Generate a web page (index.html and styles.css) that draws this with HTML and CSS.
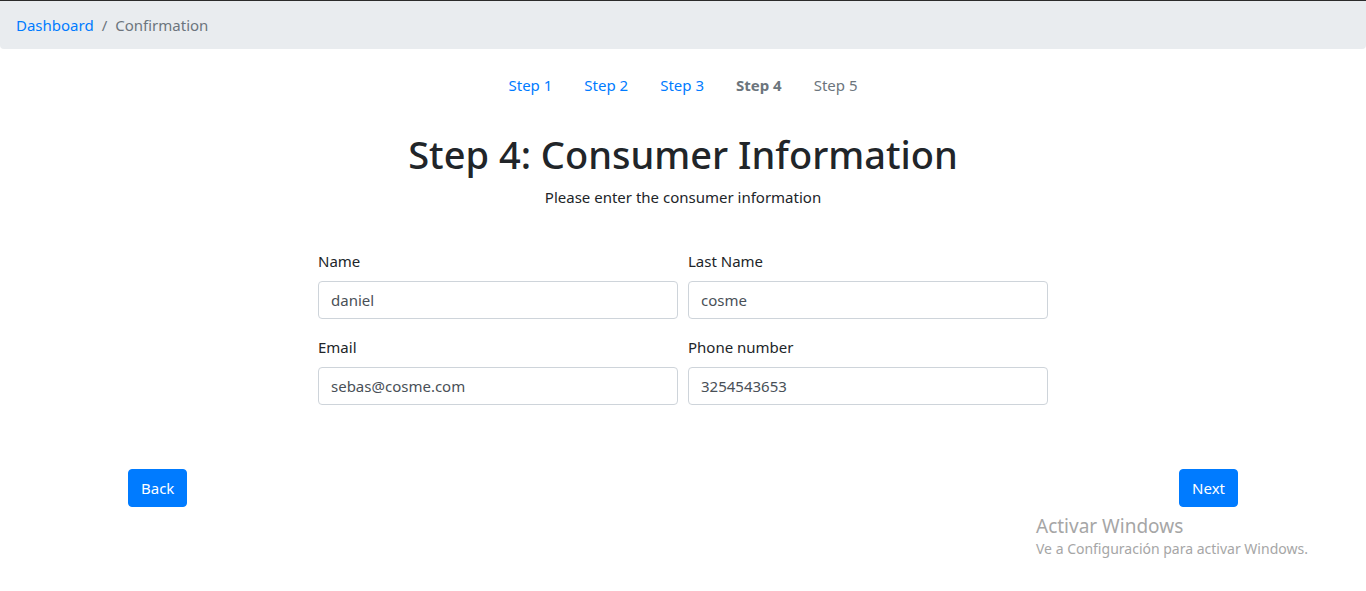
FILE: index.html
```html
<!DOCTYPE html>
<html lang="en">
<head>
<meta charset="utf-8">
<title>Confirmation</title>
<link rel="stylesheet" href="styles.css">
</head>
<body>
<div class="topline"></div>
<nav class="breadcrumb">
  <a class="crumb-link" href="#">Dashboard</a>
  <span class="crumb-sep">/</span>
  <span class="crumb-active">Confirmation</span>
</nav>
<ul class="steps">
  <li><a class="step-link" href="#">Step 1</a></li>
  <li><a class="step-link" href="#">Step 2</a></li>
  <li><a class="step-link" href="#">Step 3</a></li>
  <li><span class="step-link current">Step 4</span></li>
  <li><span class="step-link disabled">Step 5</span></li>
</ul>
<main class="container">
  <h1 class="title">Step 4: Consumer Information</h1>
  <p class="subtitle">Please enter the consumer information</p>
  <form class="form">
    <div class="form-row">
      <div class="form-group">
        <label class="label">Name</label>
        <input class="input" type="text" value="daniel">
      </div>
      <div class="form-group">
        <label class="label">Last Name</label>
        <input class="input" type="text" value="cosme">
      </div>
    </div>
    <div class="form-row">
      <div class="form-group">
        <label class="label">Email</label>
        <input class="input" type="text" value="sebas@cosme.com">
      </div>
      <div class="form-group">
        <label class="label">Phone number</label>
        <input class="input" type="text" value="3254543653">
      </div>
    </div>
  </form>
  <div class="actions">
    <button class="btn" type="button">Back</button>
    <button class="btn" type="button">Next</button>
  </div>
</main>
<div class="watermark">
  <div class="wm-title">Activar Windows</div>
  <div class="wm-sub">Ve a Configuración para activar Windows.</div>
</div>
</body>
</html>
```
FILE: styles.css
```css
* { box-sizing: border-box; }
html, body { margin: 0; padding: 0; }
body {
  font-family: "Noto Sans", "Open Sans", sans-serif;
  font-size: 15px;
  line-height: 24px;
  color: #212529;
  background: #fff;
  position: relative;
  min-height: 591px;
}
.topline { height: 1px; background: #2b2b2b; }
.breadcrumb {
  display: flex;
  align-items: center;
  height: 48px;
  padding: 12px 16px;
  margin: 0 0 16px;
  background: #e9ecef;
  border-radius: 0 0 4px 4px;
}
.crumb-link { color: #007bff; text-decoration: none; }
.crumb-sep { color: #6c757d; padding: 0 8px; }
.crumb-active { color: #6c757d; }
.steps {
  list-style: none;
  margin: 0;
  padding: 0;
  display: flex;
  justify-content: center;
}
.step-link {
  display: block;
  padding: 8px 16px;
  color: #007bff;
  text-decoration: none;
}
.step-link.current { color: #6c757d; font-weight: 700; }
.step-link.disabled { color: #6c757d; }
.container {
  width: 1140px;
  margin: 0 auto;
  padding: 0 15px;
}
.title {
  margin: 25px 0 7px;
  font-size: 38px;
  line-height: 48px;
  font-weight: 500;
  text-align: center;
}
.subtitle {
  margin: 0;
  text-align: center;
}
.form {
  width: 730px;
  margin: 40px auto 0;
}
.form-row {
  display: flex;
  gap: 10px;
}
.form-group {
  flex: 1;
  margin-bottom: 16px;
}
.label {
  display: block;
  margin-bottom: 8px;
}
.input {
  display: block;
  width: 100%;
  height: 38px;
  padding: 6px 12px;
  font-family: inherit;
  font-size: 15px;
  line-height: 24px;
  color: #495057;
  background: #fff;
  border: 1px solid #ced4da;
  border-radius: 4px;
}
.actions {
  display: flex;
  justify-content: space-between;
  margin-top: 48px;
}
.btn {
  height: 38px;
  padding: 6px 12px;
  font-family: inherit;
  font-size: 15px;
  line-height: 24px;
  color: #fff;
  background: #007bff;
  border: 1px solid #007bff;
  border-radius: 4px;
}
.watermark {
  position: absolute;
  left: 1036px;
  top: 513px;
  color: #a6a6a6;
}
.wm-title { font-size: 19px; line-height: 26px; }
.wm-sub { font-size: 14px; line-height: 20px; }
```
